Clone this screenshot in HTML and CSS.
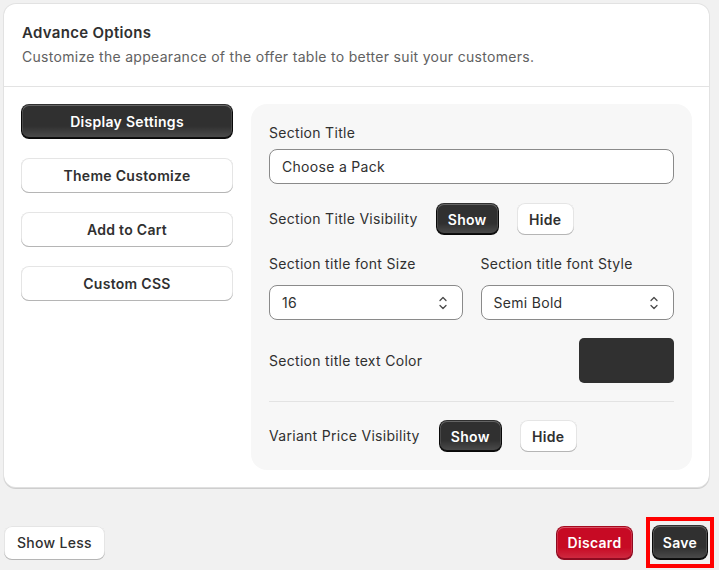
FILE: index.html
```html
<!DOCTYPE html>
<html lang="en">
<head>
<meta charset="utf-8">
<title>Advance Options</title>
<link rel="stylesheet" href="styles.css">
</head>
<body>
<div class="page">
  <section class="card">
    <header class="card-head">
      <h2 class="card-title">Advance Options</h2>
      <p class="card-desc">Customize the appearance of the offer table to better suit your customers.</p>
    </header>
    <div class="card-body">
      <nav class="tabs">
        <button class="tab tab-active">Display Settings</button>
        <button class="tab">Theme Customize</button>
        <button class="tab">Add to Cart</button>
        <button class="tab">Custom CSS</button>
      </nav>
      <div class="panel">
        <div class="field">
          <label class="label">Section Title</label>
          <div class="input">Choose a Pack</div>
        </div>
        <div class="toggle-row row-title-vis">
          <span class="label">Section Title Visibility</span>
          <button class="btn btn-dark">Show</button>
          <button class="btn btn-light">Hide</button>
        </div>
        <div class="two-col">
          <div class="field">
            <label class="label label-sm">Section title font Size</label>
            <div class="input select">
              <span>16</span>
              <svg class="chev" viewBox="0 0 20 20" width="20" height="20"><path d="M7 7.5l3-3 3 3M7 12.5l3 3 3-3" fill="none" stroke="#4a4a4a" stroke-width="1.3" stroke-linecap="round" stroke-linejoin="round"/></svg>
            </div>
          </div>
          <div class="field">
            <label class="label label-sm">Section title font Style</label>
            <div class="input select">
              <span>Semi Bold</span>
              <svg class="chev" viewBox="0 0 20 20" width="20" height="20"><path d="M7 7.5l3-3 3 3M7 12.5l3 3 3-3" fill="none" stroke="#4a4a4a" stroke-width="1.3" stroke-linecap="round" stroke-linejoin="round"/></svg>
            </div>
          </div>
        </div>
        <div class="color-row">
          <span class="label">Section title text Color</span>
          <div class="swatch"></div>
        </div>
        <hr class="panel-divider">
        <div class="toggle-row row-price-vis">
          <span class="label">Variant Price Visibility</span>
          <button class="btn btn-dark">Show</button>
          <button class="btn btn-light">Hide</button>
        </div>
      </div>
    </div>
  </section>
  <footer class="footer">
    <button class="btn btn-light btn-lg btn-less">Show Less</button>
    <div class="footer-actions">
      <button class="btn btn-red btn-lg">Discard</button>
      <span class="highlight"><button class="btn btn-dark btn-lg btn-save">Save</button></span>
    </div>
  </footer>
</div>
</body>
</html>
```

FILE: styles.css
```css
* { box-sizing: border-box; }
html, body { margin: 0; padding: 0; }
body {
  background: #f1f1f1;
  font-family: Inter, "Noto Sans", "Liberation Sans", sans-serif;
  color: #303030;
  font-size: 14px;
  line-height: 20px;
  letter-spacing: 0.3px;
  width: 719px;
  height: 570px;
  overflow: hidden;
}
.page { padding: 4px 10px 0 4px; }

.card {
  background: #fff;
  border-radius: 12px;
  box-shadow: 0 1px 0 0 rgba(26,26,26,0.10), 0 0 0 1px rgba(0,0,0,0.06), inset 0 -1px 0 0 rgba(0,0,0,0.12);
}
.card-head {
  padding: 19px 18px 19px 18px;
  border-bottom: 1px solid #e3e3e3;
}
.card-title {
  margin: 0;
  font-size: 15px;
  font-weight: 600;
  line-height: 20px;
  color: #303030;
}
.card-desc {
  margin: 4px 0 0;
  font-size: 14px;
  color: #616161;
  line-height: 20px;
}
.card-body {
  display: flex;
  gap: 18px;
  padding: 17px 17px 18px 17px;
}
.tabs {
  width: 212px;
  display: flex;
  flex-direction: column;
  gap: 19px;
  flex-shrink: 0;
}
.tab {
  height: 35px;
  border: none;
  border-radius: 8px;
  background: #fff;
  font-family: inherit;
  font-size: 14px;
  letter-spacing: 0.3px;
  font-weight: 600;
  color: #303030;
  box-shadow: inset 0 -1px 0 0 #b5b5b5, inset 0 0 0 1px rgba(0,0,0,0.1), inset 0 0.5px 0 1.5px #fff;
}
.tab-active {
  color: #fff;
  background: linear-gradient(180deg, rgba(48,48,48,0) 63%, rgba(255,255,255,0.15)), #303030;
  box-shadow: inset 0 -1px 0 1px rgba(0,0,0,0.8), inset 0 0 0 1px #303030, inset 0 0.5px 0 1.5px rgba(255,255,255,0.25);
}

.panel {
  flex: 1;
  background: #f7f7f7;
  border-radius: 16px;
  padding: 19px 18px 18px 18px;
}
.label { font-size: 14px; color: #303030; line-height: 20px; }
.field { display: flex; flex-direction: column; }
.field .label { margin-bottom: 6px; }
.field .label-sm { margin-bottom: 11px; }
.input {
  height: 35px;
  border: 1px solid #8a8a8a;
  border-radius: 8px;
  background: #fff;
  padding: 0 12px;
  display: flex;
  align-items: center;
  font-size: 14px;
  color: #303030;
}
.select { justify-content: space-between; padding-right: 9px; }
.chev { display: block; }

.toggle-row {
  display: flex;
  align-items: center;
}
.row-title-vis { margin-top: 19px; }
.row-title-vis .label { margin-right: 18px; }
.row-price-vis .label { margin-right: 19px; }
.toggle-row .btn-dark { margin-right: 18px; }

.btn {
  height: 32px;
  border: none;
  border-radius: 8px;
  font-family: inherit;
  font-size: 14px;
  letter-spacing: 0.3px;
  font-weight: 600;
  padding: 0;
  cursor: pointer;
}
.btn-dark {
  width: 63px;
  color: #fff;
  background: linear-gradient(180deg, rgba(48,48,48,0) 63%, rgba(255,255,255,0.15)), #303030;
  box-shadow: inset 0 -1px 0 1px rgba(0,0,0,0.8), inset 0 0 0 1px #303030, inset 0 0.5px 0 1.5px rgba(255,255,255,0.25);
}
.btn-light {
  width: 57px;
  color: #303030;
  background: #fff;
  box-shadow: inset 0 -1px 0 0 #b5b5b5, inset 0 0 0 1px rgba(0,0,0,0.1), inset 0 0.5px 0 1.5px #fff;
}

.two-col {
  margin-top: 19px;
  display: grid;
  grid-template-columns: 1fr 1fr;
  gap: 18px;
}
.color-row {
  margin-top: 18px;
  display: flex;
  align-items: center;
  justify-content: space-between;
}
.swatch {
  width: 95px;
  height: 45px;
  background: #303030;
  border-radius: 5px;
}
.panel-divider {
  margin: 18px 0 18px;
  border: none;
  border-top: 1px solid #e3e3e3;
}

.footer {
  margin-top: 29px;
  display: flex;
  justify-content: space-between;
  align-items: center;
}
.btn-lg { height: 34px; }
.btn-less { width: 101px; font-weight: 500; }
.footer-actions { display: flex; align-items: center; gap: 13px; margin-right: -5px; }
.btn-red {
  width: 77px;
  color: #fff;
  background: linear-gradient(180deg, rgba(199,10,36,0) 63%, rgba(255,255,255,0.15)), #c70a24;
  box-shadow: inset 0 -1px 0 1px #8e0b21, inset 0 0 0 1px #a50b1f, inset 0 0.5px 0 1.5px rgba(255,255,255,0.3);
}
.highlight {
  display: inline-flex;
  border: 4px solid #ff0000;
  padding: 4px 2px;
}
.btn-save { width: 56px; height: 35px; }
```
